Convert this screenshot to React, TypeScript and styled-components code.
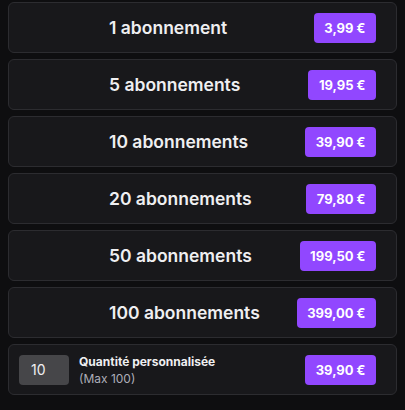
import styled, { createGlobalStyle } from "styled-components";

const GlobalStyle = createGlobalStyle`
  html, body {
    margin: 0;
    background: #0e0e10;
  }
  body {
    font-family: Inter, "Noto Sans", sans-serif;
    color: #efeff1;
  }
`;

const List = styled.div`
  display: flex;
  flex-direction: column;
  gap: 6px;
  padding: 2px 8px 8px;
`;

const Card = styled.div<{ $custom?: boolean }>`
  display: flex;
  align-items: center;
  justify-content: space-between;
  height: 51px;
  box-sizing: border-box;
  background: #18181b;
  border: 1px solid #2c2c30;
  border-radius: 6px;
  padding: ${(p) => (p.$custom ? "0 20px 0 10px" : "0 20px 0 100px")};
`;

const Label = styled.span`
  font-size: 17.5px;
  font-weight: 600;
`;

const Price = styled.button`
  height: 30px;
  padding: 0 10.5px;
  border: none;
  border-radius: 4px;
  background: #9147ff;
  color: #ffffff;
  font-family: Inter, "Noto Sans", sans-serif;
  font-size: 13px;
  font-weight: 700;
  cursor: pointer;
`;

const CustomLeft = styled.div`
  display: flex;
  align-items: center;
  gap: 10px;
`;

const QtyInput = styled.input`
  width: 50px;
  height: 30px;
  box-sizing: border-box;
  padding: 0 12px;
  border: none;
  border-radius: 4px;
  background: #464649;
  color: #efeff1;
  font-family: Inter, "Noto Sans", sans-serif;
  font-size: 14px;
  outline: none;
`;

const CustomText = styled.div`
  display: flex;
  flex-direction: column;
  gap: 2px;
`;

const CustomTitle = styled.span`
  font-size: 12px;
  font-weight: 700;
`;

const CustomHint = styled.span`
  font-size: 12px;
  color: #adadb8;
`;

const offers = [
  { label: "1 abonnement", price: "3,99 €" },
  { label: "5 abonnements", price: "19,95 €" },
  { label: "10 abonnements", price: "39,90 €" },
  { label: "20 abonnements", price: "79,80 €" },
  { label: "50 abonnements", price: "199,50 €" },
  { label: "100 abonnements", price: "399,00 €" },
];

export default function App() {
  return (
    <>
      <GlobalStyle />
      <List>
        {offers.map((o) => (
          <Card key={o.label}>
            <Label>{o.label}</Label>
            <Price>{o.price}</Price>
          </Card>
        ))}
        <Card $custom>
          <CustomLeft>
            <QtyInput defaultValue="10" />
            <CustomText>
              <CustomTitle>Quantité personnalisée</CustomTitle>
              <CustomHint>(Max 100)</CustomHint>
            </CustomText>
          </CustomLeft>
          <Price>39,90 €</Price>
        </Card>
      </List>
    </>
  );
}
